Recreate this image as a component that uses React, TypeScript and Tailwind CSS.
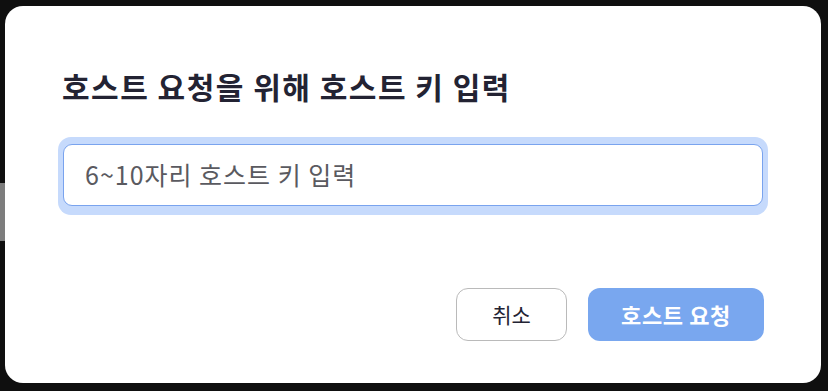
import React from "react";

export default function App() {
  const font = { fontFamily: '"Noto Sans CJK KR", "Noto Sans", sans-serif' };
  return (
    <div className="relative w-[828px] h-[391px] bg-[#0f0f0f] overflow-hidden" style={font}>
      <div className="absolute left-0 top-[183px] w-[6px] h-[58px] bg-[#7d7d7d]" />
      <div className="relative ml-[5px] mt-[6px] w-[816px] h-[377px] rounded-[18px] bg-white px-[57px] pt-[60px] flex flex-col">
        <h1 className="text-[30px] leading-[40px] font-bold text-[#232333] tracking-[1.5px]">
          호스트 요청을 위해 호스트 키 입력
        </h1>
        <div className="mt-[31px] -mx-[4px] rounded-[13px] bg-[#c6dafc] px-[5px] pt-[7px] pb-[9px]">
          <div className="h-[62px] rounded-[9px] border border-[#79a3ee] bg-white flex items-center pl-[21px]">
            <span className="text-[25px] text-[#5a5a60] tracking-[1px]">6~10자리 호스트 키 입력</span>
          </div>
        </div>
        <div className="mt-auto mb-[42px] flex justify-end gap-[21px]">
          <button className="w-[111px] h-[53px] rounded-[12px] border border-[#bababa] bg-white text-[21px] text-[#232333]">
            취소
          </button>
          <button className="w-[176px] h-[53px] rounded-[12px] bg-[#79a7ef] text-[22px] font-bold text-white tracking-[0.6px]">
            호스트 요청
          </button>
        </div>
      </div>
    </div>
  );
}
